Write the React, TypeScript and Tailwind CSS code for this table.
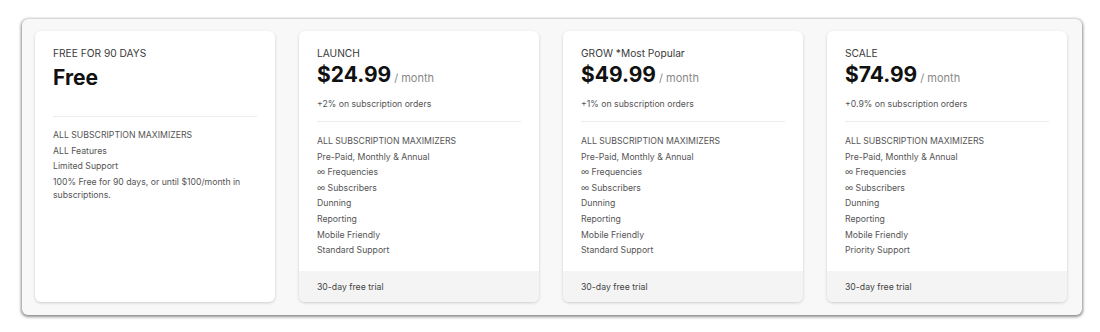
import React from "react";

type Plan = {
  name: string;
  price: string;
  fee: string;
  features: string[];
};

const plans: Plan[] = [
  {
    name: "LAUNCH",
    price: "$24.99",
    fee: "+2% on subscription orders",
    features: [
      "ALL SUBSCRIPTION MAXIMIZERS",
      "Pre-Paid, Monthly & Annual",
      "∞ Frequencies",
      "∞ Subscribers",
      "Dunning",
      "Reporting",
      "Mobile Friendly",
      "Standard Support",
    ],
  },
  {
    name: "GROW *Most Popular",
    price: "$49.99",
    fee: "+1% on subscription orders",
    features: [
      "ALL SUBSCRIPTION MAXIMIZERS",
      "Pre-Paid, Monthly & Annual",
      "∞ Frequencies",
      "∞ Subscribers",
      "Dunning",
      "Reporting",
      "Mobile Friendly",
      "Standard Support",
    ],
  },
  {
    name: "SCALE",
    price: "$74.99",
    fee: "+0.9% on subscription orders",
    features: [
      "ALL SUBSCRIPTION MAXIMIZERS",
      "Pre-Paid, Monthly & Annual",
      "∞ Frequencies",
      "∞ Subscribers",
      "Dunning",
      "Reporting",
      "Mobile Friendly",
      "Priority Support",
    ],
  },
];

const FreeCard = () => (
  <div className="flex h-[271px] w-[240px] flex-col rounded-md bg-white px-[18px] pt-[15px] shadow-[0_1px_3px_rgba(0,0,0,0.18)]">
    <div className="text-[10.2px] leading-[14px] text-[#3a3a3a]">FREE FOR 90 DAYS</div>
    <div className="mt-[4px] text-[21px] font-bold leading-[28px] text-[#111]">Free</div>
    <div className="mt-[24px] border-t border-[#ececec]" />
    <ul className="mt-[12px] flex flex-col gap-[2.6px] text-[8.7px] leading-[13px] text-[#555]">
      <li>ALL SUBSCRIPTION MAXIMIZERS</li>
      <li>ALL Features</li>
      <li>Limited Support</li>
      <li>100% Free for 90 days, or until $100/month in subscriptions.</li>
    </ul>
  </div>
);

const PlanCard = ({ plan }: { plan: Plan }) => (
  <div className="flex h-[271px] w-[240px] flex-col overflow-hidden rounded-md bg-white shadow-[0_1px_3px_rgba(0,0,0,0.18)]">
    <div className="flex-1 px-[18px] pt-[15px]">
      <div className="text-[10.2px] leading-[14px] text-[#3a3a3a]">{plan.name}</div>
      <div className="flex items-baseline gap-[3px] leading-[30px]">
        <span className="text-[21px] font-bold text-[#111]">{plan.price}</span>
        <span className="text-[11px] text-[#888]">/ month</span>
      </div>
      <div className="mt-[5px] text-[8.7px] leading-[13px] text-[#555]">{plan.fee}</div>
      <div className="mt-[10px] border-t border-[#ececec]" />
      <ul className="mt-[13px] flex flex-col gap-[2.6px] text-[8.7px] leading-[13px] text-[#555]">
        {plan.features.map((f) => (
          <li key={f}>{f}</li>
        ))}
      </ul>
    </div>
    <div className="flex h-[31px] items-center bg-[#f4f4f4] px-[18px] pt-[3px] text-[8.7px] text-[#444]">
      30-day free trial
    </div>
  </div>
);

export default function App() {
  return (
    <div
      className="min-h-[332px] bg-white pl-[22px] pt-[19px]"
      style={{ fontFamily: "Inter, 'Noto Sans', sans-serif" }}
    >
      <div className="flex h-[296px] w-[1060px] gap-[24px] rounded-md bg-[#f8f8f8] px-[13px] pt-[12px] shadow-[0_1px_3px_1px_rgba(0,0,0,0.45)]">
        <FreeCard />
        {plans.map((p) => (
          <PlanCard key={p.name} plan={p} />
        ))}
      </div>
    </div>
  );
}
